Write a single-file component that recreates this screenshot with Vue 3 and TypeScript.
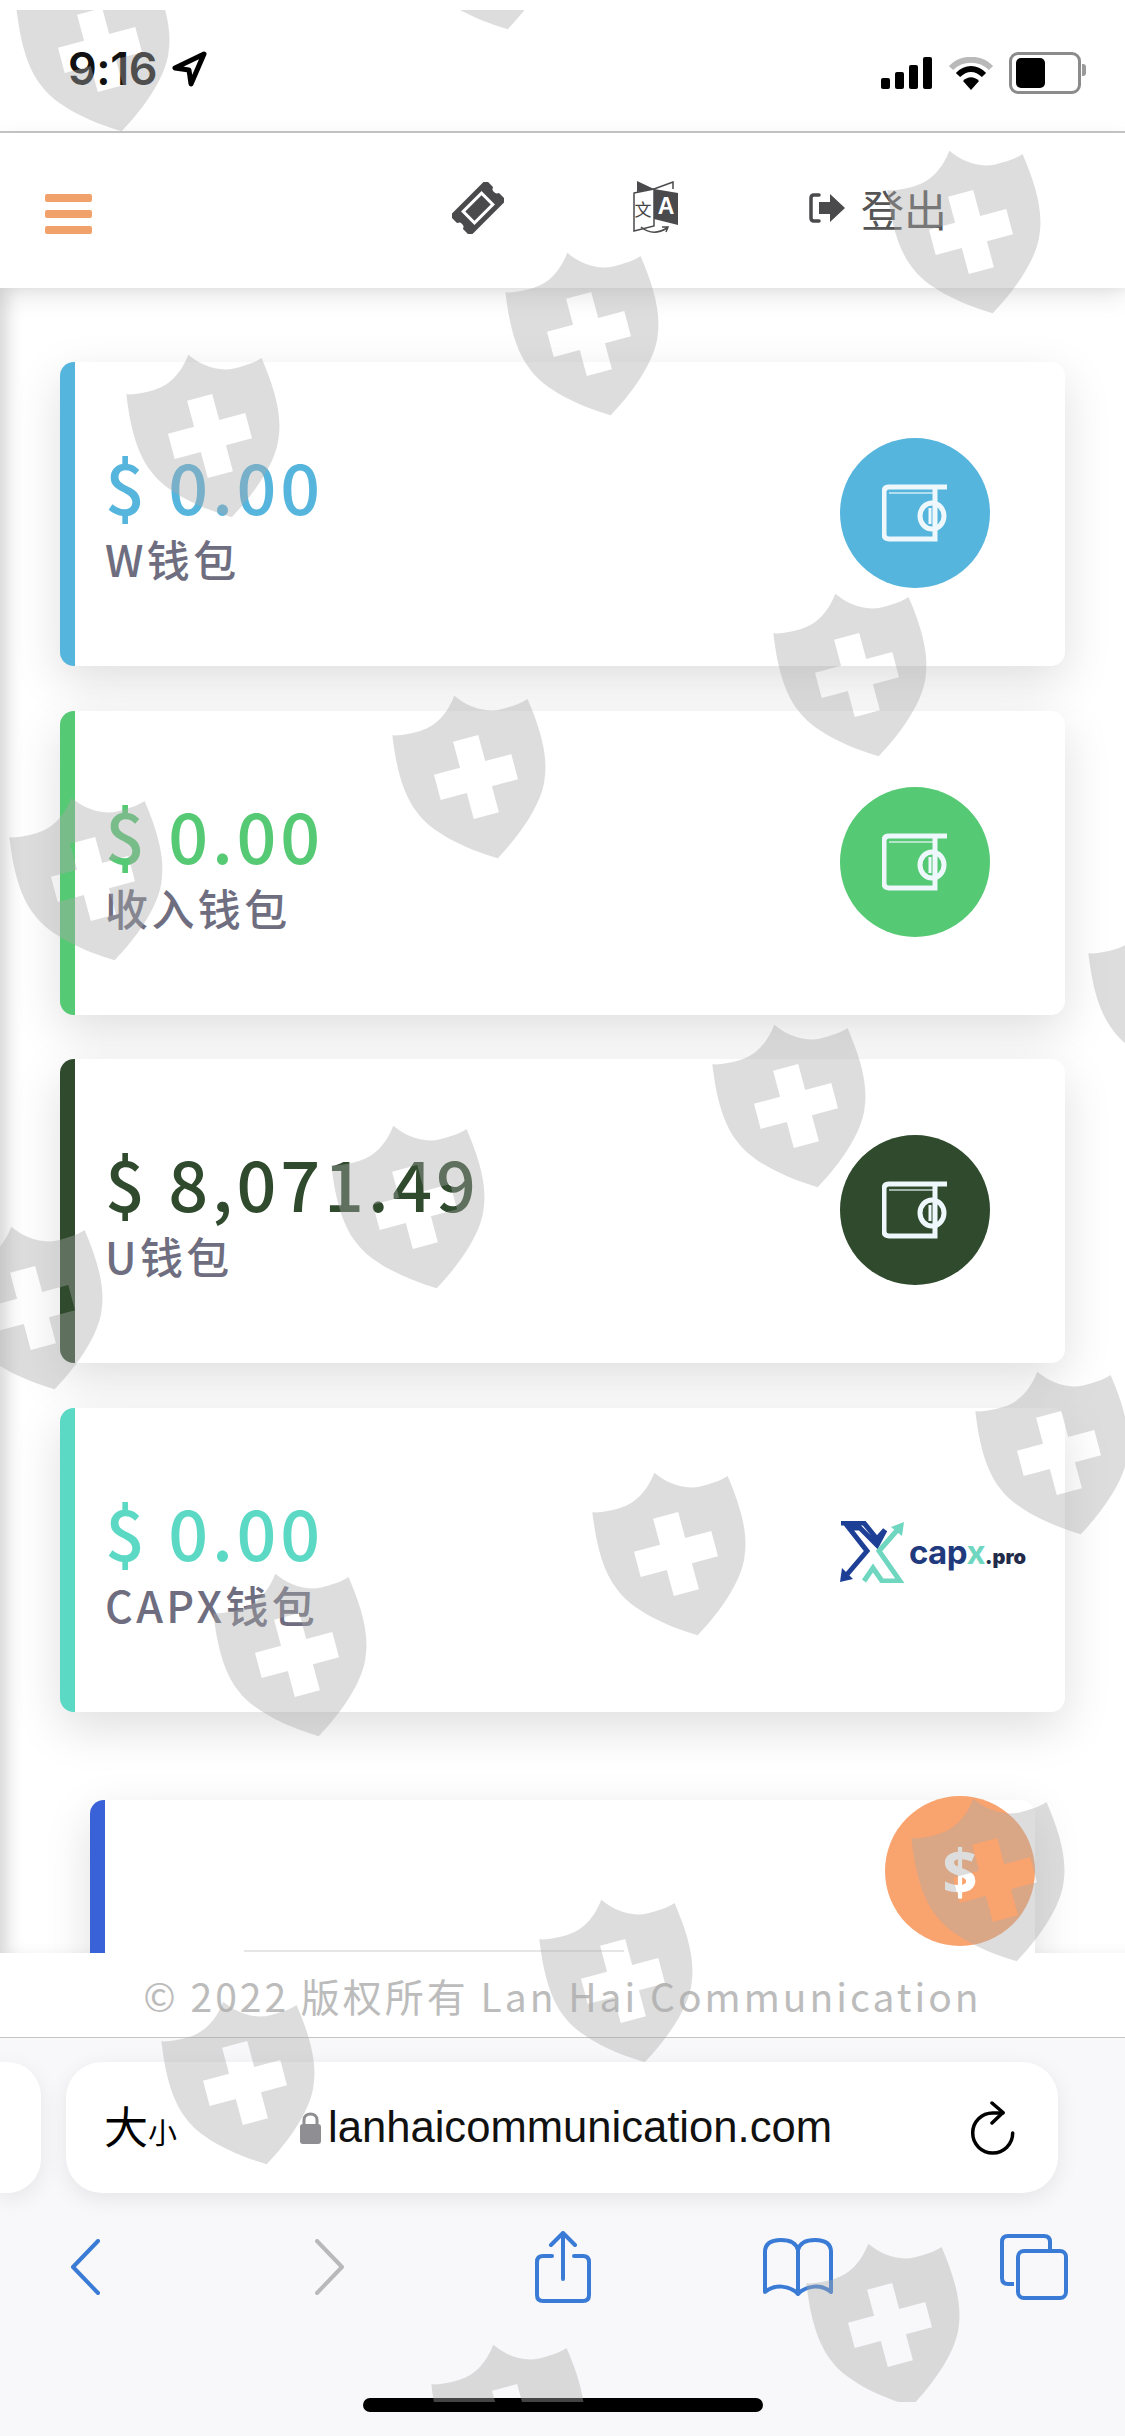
<script setup lang="ts">
interface Wallet {
  amount: string
  label: string
  color: string
  logo?: boolean
}

const wallets: Wallet[] = [
  { amount: '$ 0.00', label: 'W钱包', color: '#56b5dd' },
  { amount: '$ 0.00', label: '收入钱包', color: '#55c973' },
  { amount: '$ 8,071.49', label: 'U钱包', color: '#2f4a2d' },
  { amount: '$ 0.00', label: 'CAPX钱包', color: '#5bd9c4', logo: true }
]

// watermark centres, full-size coordinates
const marks: [number, number][] = [
  [100, 50], [486, -52], [971, 232], [589, 334], [210, 436], [857, 675],
  [476, 777], [93, 879], [1172, 995], [796, 1106], [415, 1207], [33, 1308],
  [1059, 1453], [676, 1554], [297, 1655], [995, 1880], [623, 1981], [245, 2083],
  [890, 2325], [515, 2426]
]

const shieldPath =
  'M0 0C10 14 25 25 42 25C52 25 62 25 70 22C74 50 76 80 66 103C58 125 30 150 0 168' +
  'C-30 150-58 125-66 103C-76 80-74 50-70 22C-62 25-52 25-42 25C-25 25-10 14 0 0Z' +
  'M-13 44V71H-40V97H-13V124H13V97H40V71H13V44Z'
</script>

<template>
  <div class="screen">
    <header class="status">
      <div class="status-left">
        <span class="time">9:16</span>
        <svg class="loc" viewBox="0 0 36 36">
          <path d="M33 3 4 17l14 2 2 14z" fill="none" stroke="#000" stroke-width="5" stroke-linejoin="round" />
        </svg>
      </div>
      <div class="status-right">
        <svg class="signal" width="52" height="32" viewBox="0 0 52 32">
          <rect x="0" y="21" width="9" height="11" rx="2" />
          <rect x="14" y="15" width="9" height="17" rx="2" />
          <rect x="28" y="8" width="9" height="24" rx="2" />
          <rect x="42" y="0" width="9" height="32" rx="2" />
        </svg>
        <svg class="wifi" width="46" height="33" viewBox="0 0 46 33">
          <path d="M3 11C14 0 32 0 43 11" fill="none" stroke="#b9b9b9" stroke-width="6" />
          <path d="M10 18C18 10 28 10 36 18" fill="none" stroke="#000" stroke-width="6" />
          <path d="M23 33 15 24C20 19 26 19 31 24Z" />
        </svg>
        <div class="battery"><span class="battery-fill"></span></div>
      </div>
    </header>

    <nav class="topnav">
      <div class="burger"><span></span><span></span><span></span></div>
      <svg class="ticket" width="52" height="52" viewBox="0 0 52 52">
        <g transform="rotate(-45 26 26)">
          <path d="M2 13H50V21C46 22 46 30 50 31V39H2V31C6 30 6 22 2 21Z" fill="#4a4a4c" stroke="#4a4a4c" stroke-width="3" stroke-linejoin="round" />
          <rect x="13" y="18" width="26" height="16" fill="none" stroke="#fff" stroke-width="3" />
        </g>
      </svg>
      <svg class="translate" width="46" height="54" viewBox="0 0 46 54">
        <path d="M4 0 21 8 4 11Z" fill="#4a4a4c" />
        <path d="M21 8 40 1V8" fill="none" stroke="#4a4a4c" stroke-width="1.5" />
        <path d="M1 12 21 8V45L1 50Z" fill="#fff" stroke="#4a4a4c" stroke-width="1.5" />
        <path d="M21 8 45 12V44L21 38Z" fill="#4a4a4c" />
        <text x="10" y="35" class="tr-zh">文</text>
        <text x="33" y="33" class="tr-en">A</text>
        <path d="M8 46Q20 56 34 47M29 46 35 46 33 51" fill="none" stroke="#4a4a4c" stroke-width="1.5" />
      </svg>
      <div class="logout">
        <svg width="37" height="30" viewBox="0 0 37 30">
          <path d="M10 2H5Q2 2 2 5V25Q2 28 5 28H10" fill="none" stroke="#4a4a4c" stroke-width="3.5" stroke-linecap="round" />
          <path d="M21 1 36 15 21 29V21H10V9H21Z" fill="#4a4a4c" />
        </svg>
        <span>登出</span>
      </div>
    </nav>

    <main class="content">
      <section
        v-for="w in wallets"
        :key="w.label"
        class="card"
        :style="{ borderLeftColor: w.color }"
      >
        <div class="card-text">
          <div class="amount" :style="{ color: w.color }">{{ w.amount }}</div>
          <div class="label">{{ w.label }}</div>
        </div>
        <div v-if="w.logo" class="capx">
          <svg width="66" height="62" viewBox="0 0 66 62">
            <path d="M1 2H24L37 18 45 9 37 24 20 7H9L27 30 4 57" fill="none" stroke="#1e3f96" stroke-width="5" />
            <path d="M0 61 2 47 13 58Z" fill="#1e3f96" />
            <path d="M60 6 39 30 60 60H42L33 47 24 60" fill="none" stroke="#6fd6c0" stroke-width="5" />
            <path d="M64 1 62 15 51 6Z" fill="#6fd6c0" />
          </svg>
          <span class="capx-name">cap<i>x</i><b>.pro</b></span>
        </div>
        <div v-else class="round" :style="{ background: w.color }">
          <svg width="66" height="58" viewBox="0 0 66 58" fill="none" stroke="#eef8fc" stroke-width="5">
            <path d="M65 3H7Q2 3 2 8V50Q2 55 7 55H53V3" />
            <path d="M7 9H53" stroke-width="2" opacity=".6" />
            <ellipse cx="50" cy="32" rx="12" ry="13" />
            <path d="M48 24V40" stroke-width="3" />
          </svg>
        </div>
      </section>
      <section class="card card-partial"></section>
    </main>

    <footer class="foot">© 2022 版权所有 Lan Hai Communication</footer>

    <div class="browser">
      <div class="url-row">
        <div class="url-stub"></div>
        <div class="url-bar">
          <span class="aa">大<small>小</small></span>
          <svg class="lock" width="21" height="32" viewBox="0 0 21 32">
            <rect x="0" y="12" width="21" height="20" rx="3" fill="#8e8e93" />
            <path d="M4 13V8C4 0 17 0 17 8V13" fill="none" stroke="#8e8e93" stroke-width="3" />
          </svg>
          <span class="url">lanhaicommunication.com</span>
          <svg class="reload" width="46" height="54" viewBox="0 0 46 54" fill="none" stroke="#000" stroke-width="3.5" stroke-linecap="round" stroke-linejoin="round">
            <path d="M42.7 32A20 20 0 1 1 22.7 12H33" />
            <path d="M22 2 33 11.5 22 22" />
          </svg>
        </div>
      </div>
      <div class="tools">
        <svg class="t-back" width="30" height="56" viewBox="0 0 30 56" fill="none" stroke="#3a7bd5" stroke-width="4" stroke-linecap="round" stroke-linejoin="round">
          <path d="M28 2 3 28 28 54" />
        </svg>
        <svg class="t-forward" width="30" height="56" viewBox="0 0 30 56" fill="none" stroke="#b9b9bb" stroke-width="4" stroke-linecap="round" stroke-linejoin="round">
          <path d="M2 2 27 28 2 54" />
        </svg>
        <svg class="t-share" width="56" height="72" viewBox="0 0 56 72" fill="none" stroke="#3a7bd5" stroke-width="4" stroke-linecap="round" stroke-linejoin="round">
          <path d="M17 25H8Q2 25 2 31V64Q2 70 8 70H48Q54 70 54 64V31Q54 25 48 25H39" />
          <path d="M28 3V48M16 14 28 2 40 14" />
        </svg>
        <svg class="t-book" width="70" height="58" viewBox="0 0 70 58" fill="none" stroke="#3a7bd5" stroke-width="4" stroke-linecap="round" stroke-linejoin="round">
          <path d="M35 12C33 4 26 2 18 2 10 2 2 4 2 14V54C12 46 26 47 35 56 44 47 58 46 68 54V14C68 4 60 2 52 2 44 2 37 4 35 12V56" />
        </svg>
        <svg class="t-tabs" width="68" height="66" viewBox="0 0 68 66" fill="none" stroke="#3a7bd5" stroke-width="4" stroke-linejoin="round">
          <path d="M14 50H8Q2 50 2 44V8Q2 2 8 2H44Q50 2 50 8V16" />
          <rect x="18" y="17" width="48" height="47" rx="6" />
        </svg>
      </div>
      <div class="home-bar"></div>
    </div>

    <div class="pay-btn">$</div>

    <svg class="watermark" viewBox="0 10 1125 2392">
      <path
        v-for="([x, y], i) in marks"
        :key="i"
        :d="shieldPath"
        :transform="`translate(${x} ${y}) rotate(-15) translate(0 -84)`"
        fill-rule="evenodd"
      />
    </svg>
  </div>
</template>

<style>
html,
body {
  margin: 0;
  background: #fff;
}
</style>

<style scoped>
.screen {
  position: relative;
  width: 1125px;
  height: 2436px;
  overflow: hidden;
  display: flex;
  flex-direction: column;
  background: #fff;
  font-family: "Noto Sans CJK SC", "Noto Sans", sans-serif;
}

.status {
  height: 131px;
  box-sizing: content-box;
  border-bottom: 2px solid #c6c6c6;
  display: flex;
  justify-content: space-between;
  align-items: flex-start;
  padding: 0 44px 0 68px;
  flex: none;
}

.status-left {
  display: flex;
  align-items: center;
  gap: 14px;
  margin-top: 45px;
}

.time {
  font-family: Inter, "Liberation Sans", sans-serif;
  font-size: 45px;
  font-weight: 600;
  line-height: 48px;
  letter-spacing: -0.5px;
  color: #111;
}

.loc {
  width: 36px;
  height: 36px;
}

.status-right {
  display: flex;
  align-items: center;
  gap: 15px;
  margin-top: 52px;
}

.battery {
  position: relative;
  width: 58px;
  height: 30px;
  border: 3px solid #8b8b8b;
  border-radius: 9px;
  padding: 3px 4px;
  box-sizing: content-box;
}

.battery::after {
  content: "";
  position: absolute;
  right: -8px;
  top: 9px;
  width: 4px;
  height: 12px;
  border-radius: 0 3px 3px 0;
  background: #9a9a9a;
}

.battery-fill {
  display: block;
  width: 29px;
  height: 100%;
  background: #000;
  border-radius: 5px;
}

.topnav {
  height: 155px;
  flex: none;
  display: flex;
  align-items: center;
  padding-left: 45px;
  padding-bottom: 6px;
  box-sizing: border-box;
  background: #fff;
  position: relative;
  z-index: 2;
  box-shadow: 0 8px 24px rgba(0, 0, 0, 0.1);
}

.burger {
  width: 47px;
  display: flex;
  flex-direction: column;
  gap: 8px;
  margin-top: 12px;
}

.burger span {
  height: 8px;
  border-radius: 2px;
  background: #f0a26a;
}

.ticket {
  margin-left: 360px;
}

.translate {
  margin-left: 129px;
}

.tr-zh {
  font-size: 17px;
  fill: #444;
  text-anchor: middle;
}

.tr-en {
  font-size: 23px;
  font-weight: 700;
  fill: #fff;
  text-anchor: middle;
  font-family: "Liberation Sans", sans-serif;
}

.logout {
  margin-left: 130px;
  display: flex;
  align-items: center;
  gap: 15px;
  color: #555;
  font-size: 43px;
  line-height: 48px;
}

.content {
  flex: 1;
  min-height: 0;
  overflow: hidden;
  padding: 74px 60px 0;
  background: #fff;
  box-shadow: inset 14px 0 18px -8px rgba(0, 0, 0, 0.18);
}

.card {
  height: 304px;
  box-sizing: border-box;
  display: flex;
  align-items: center;
  justify-content: space-between;
  margin-bottom: 44.6px;
  padding: 0 75px 0 30px;
  background: #fff;
  border-left: 15px solid;
  border-radius: 14px;
  box-shadow: 0 16px 48px rgba(0, 0, 0, 0.13);
}

.card-partial {
  margin: 88px 30px 0;
  border-left-color: #3a62d8;
}

.amount {
  font-size: 70px;
  font-weight: 500;
  line-height: 76px;
  letter-spacing: 3.8px;
}

.label {
  font-size: 43px;
  font-weight: 500;
  line-height: 46px;
  letter-spacing: 3.4px;
  color: #6e6e80;
  margin-top: 12px;
}

.round {
  width: 150px;
  height: 150px;
  border-radius: 50%;
  display: flex;
  align-items: center;
  justify-content: center;
  margin-bottom: 2px;
}

.capx {
  display: flex;
  align-items: center;
  gap: 3px;
  margin-right: -36px;
  margin-bottom: 15px;
}

.capx-name {
  font-family: Inter, "Liberation Sans", sans-serif;
  font-size: 33px;
  font-weight: 700;
  color: #1f3a7d;
  letter-spacing: -0.5px;
}

.capx-name i {
  font-style: normal;
  color: #6fd6c0;
}

.capx-name b {
  font-size: 20px;
  color: #232b4a;
  letter-spacing: 0;
}

.foot {
  height: 84px;
  flex: none;
  position: relative;
  z-index: 1;
  background: #fff;
  display: flex;
  align-items: center;
  justify-content: center;
  font-size: 39px;
  letter-spacing: 3px;
  color: #bcbcbc;
}

.foot::before {
  content: "";
  position: absolute;
  top: -3px;
  left: 244px;
  width: 380px;
  height: 2px;
  background: #e6e6e6;
}

.browser {
  height: 399px;
  flex: none;
  position: relative;
  z-index: 1;
  box-sizing: border-box;
  border-top: 1px solid #c4c4c4;
  background: #f8f8fa;
  padding-top: 24px;
}

.url-row {
  display: flex;
  gap: 25px;
  height: 131px;
}

.url-stub {
  width: 41px;
  background: #fff;
  border-radius: 0 34px 34px 0;
  box-shadow: 0 6px 22px rgba(0, 0, 0, 0.08);
}

.url-bar {
  width: 992px;
  box-sizing: border-box;
  padding: 0 42px 0 38px;
  display: flex;
  align-items: center;
  background: #fff;
  border-radius: 36px;
  box-shadow: 0 6px 22px rgba(0, 0, 0, 0.08);
}

.aa {
  width: 196px;
  font-size: 44px;
  line-height: 50px;
  color: #000;
}

.aa small {
  font-size: 29px;
}

.lock {
  margin-right: 7px;
}

.url {
  font-family: "Liberation Sans", sans-serif;
  font-size: 43.6px;
  color: #111;
  flex: 1;
}

.tools {
  display: flex;
  align-items: center;
  padding-left: 70px;
  margin-top: 38px;
  height: 72px;
}

.t-forward {
  margin-left: 215px;
}

.t-share {
  margin-left: 190px;
}

.t-book {
  margin-left: 172px;
}

.t-tabs {
  margin-left: 167px;
}

.home-bar {
  position: absolute;
  left: 363px;
  top: 360px;
  width: 400px;
  height: 14px;
  border-radius: 7px;
  background: #000;
}

.pay-btn {
  position: absolute;
  left: 885px;
  top: 1796px;
  z-index: 3;
  width: 150px;
  height: 150px;
  border-radius: 50%;
  background: #f9a36f;
  color: #fff;
  display: flex;
  align-items: center;
  justify-content: center;
  font-size: 62px;
  font-weight: 700;
  font-family: "Noto Sans", sans-serif;
}

.watermark {
  position: absolute;
  left: 0;
  top: 10px;
  width: 1125px;
  height: 2392px;
  z-index: 5;
  pointer-events: none;
  fill: rgba(170, 170, 170, 0.4);
}
</style>
